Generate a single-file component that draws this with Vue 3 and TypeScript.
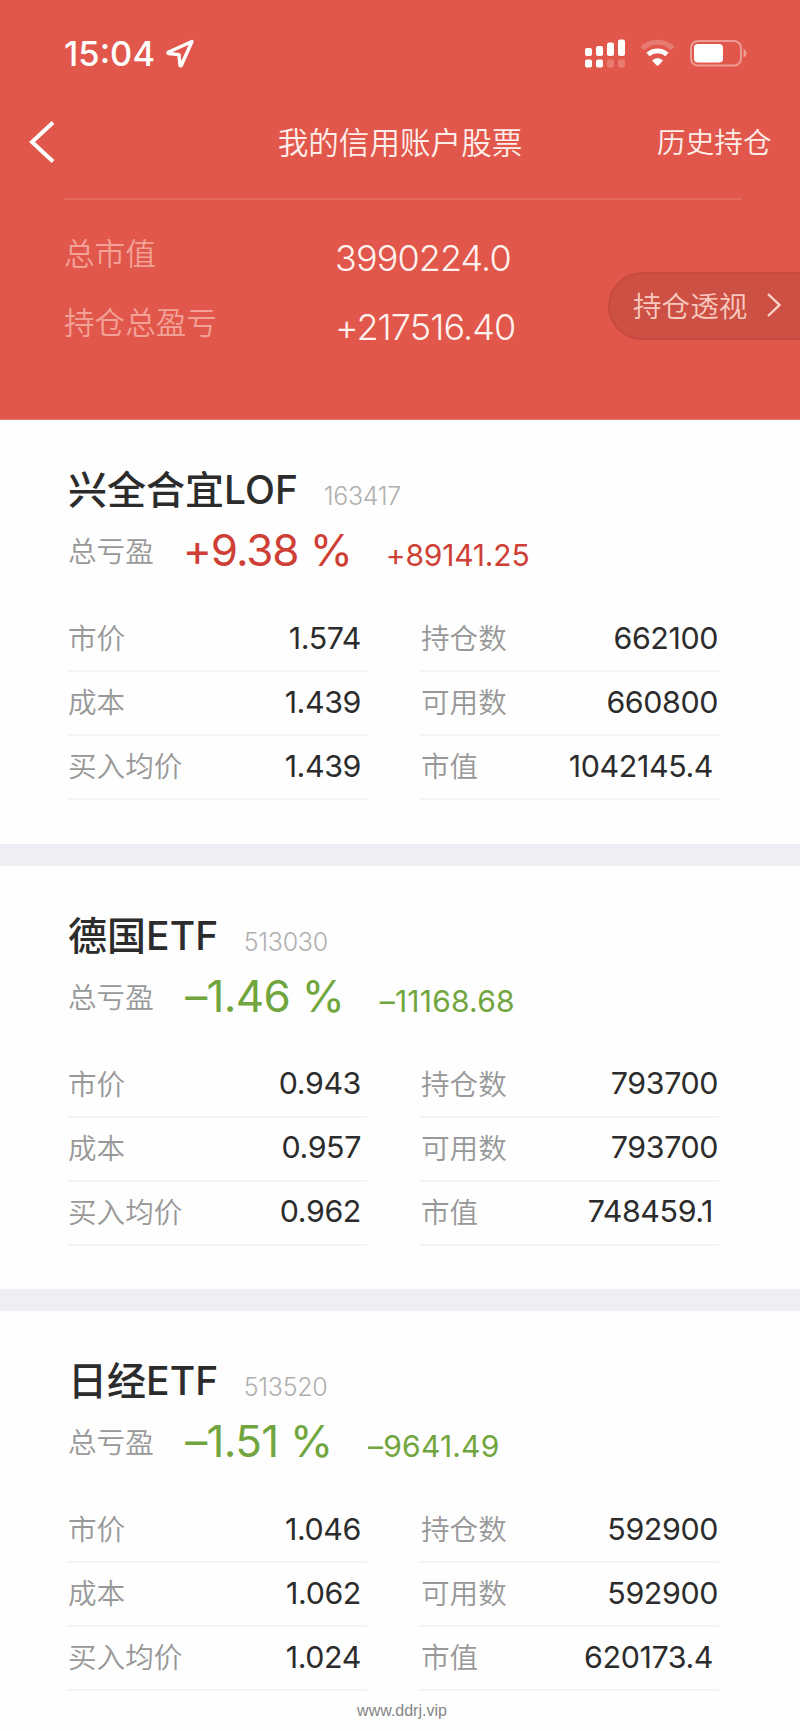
<script setup lang="ts">
interface Field {
  label: string
  value: string
  inset?: boolean
}

interface Holding {
  name: string
  ticker: string
  code: string
  percent: string
  profit: string
  gain: boolean
  left: Field[]
  right: Field[]
}

const build = (
  name: string,
  ticker: string,
  code: string,
  percent: string,
  profit: string,
  values: string[],
): Holding => ({
  name,
  ticker,
  code,
  percent,
  profit,
  gain: profit.startsWith('+'),
  left: [
    { label: '市价', value: values[0] },
    { label: '成本', value: values[1] },
    { label: '买入均价', value: values[2] },
  ],
  right: [
    { label: '持仓数', value: values[3] },
    { label: '可用数', value: values[4] },
    { label: '市值', value: values[5], inset: true },
  ],
})

const holdings: Holding[] = [
  build('兴全合宜', 'LOF', '163417', '+9.38 %', '+89141.25', ['1.574', '1.439', '1.439', '662100', '660800', '1042145.4']),
  build('德国', 'ETF', '513030', '–1.46 %', '–11168.68', ['0.943', '0.957', '0.962', '793700', '793700', '748459.1']),
  build('日经', 'ETF', '513520', '–1.51 %', '–9641.49', ['1.046', '1.062', '1.024', '592900', '592900', '620173.4']),
]
</script>

<template>
  <main class="screen">
    <header class="top">
      <div class="status">
        <span class="time">15:04</span>
        <svg class="locate" width="30" height="30" viewBox="0 0 30 30">
          <path d="M27 2.5 3.2 13.3 Q2.6 14.1 3.6 14.5 L14 15.6 15 26.2 Q15.6 27.4 16.4 26.2 Z" />
        </svg>
        <svg class="signals" width="166" height="30" viewBox="0 0 166 30">
          <g fill="#fff">
            <rect x="1" y="9" width="7" height="8" rx="2" />
            <rect x="12" y="7" width="7" height="10" rx="2" />
            <rect x="23" y="3.5" width="7" height="13.5" rx="2" />
            <rect x="34" y="0.5" width="7" height="16.5" rx="2" />
            <rect x="1" y="20.5" width="7" height="8" rx="2" />
            <rect x="12" y="20.5" width="7" height="8" rx="2" />
            <rect x="23" y="20.5" width="7" height="8" rx="2" opacity=".22" />
            <rect x="34" y="20.5" width="7" height="8" rx="2" opacity=".22" />
          </g>
          <g fill="none" stroke="#fff">
            <path d="M58.3 9.6 A21.5 21.5 0 0 1 88.7 9.6" stroke-width="5" opacity=".22" />
            <path d="M64 15.6 A14 14 0 0 1 83 15.6" stroke-width="4.8" />
          </g>
          <path d="M68 21.6 Q73.5 16.6 79 21.6 L74.6 26.3 Q73.5 27.2 72.4 26.3 Z" fill="#fff" />
          <rect x="107" y="2" width="50" height="24.5" rx="7" fill="none" stroke="#fff" stroke-width="2" opacity=".4" />
          <rect x="110" y="5" width="29" height="18.5" rx="4" fill="#fff" />
          <path d="M159.5 10 Q162.5 11 162.5 14.2 Q162.5 17.4 159.5 18.4 Z" fill="#fff" opacity=".4" />
        </svg>
      </div>

      <nav class="nav">
        <svg class="back" width="26" height="44" viewBox="0 0 26 44">
          <path d="M24 2.5 3 22 24 41.5" />
        </svg>
        <h1>我的信用账户股票</h1>
        <span class="history">历史持仓</span>
      </nav>

      <section class="summary">
        <div class="sum-row">
          <span class="sum-label">总市值</span>
          <span class="sum-value">3990224.0</span>
        </div>
        <div class="sum-row">
          <span class="sum-label">持仓总盈亏</span>
          <span class="sum-value">+217516.40</span>
        </div>
        <button class="lens">
          <span>持仓透视</span>
          <svg width="16" height="26" viewBox="0 0 16 26"><path d="M2 2 13.5 13 2 24" /></svg>
        </button>
      </section>
    </header>

    <article v-for="h in holdings" :key="h.code" class="holding">
      <div class="title">
        <span class="name">{{ h.name }}</span><span class="ticker">{{ h.ticker }}</span>
        <span class="code">{{ h.code }}</span>
      </div>
      <div class="profit" :class="h.gain ? 'gain' : 'loss'">
        <span class="label">总亏盈</span>
        <span class="percent">{{ h.percent }}</span>
        <span class="amount">{{ h.profit }}</span>
      </div>
      <div class="columns">
        <div v-for="(col, i) in [h.left, h.right]" :key="i" class="column">
          <div v-for="f in col" :key="f.label" class="field" :class="{ wide: i === 0, inset: f.inset }">
            <span class="label">{{ f.label }}</span>
            <span class="value">{{ f.value }}</span>
          </div>
        </div>
      </div>
    </article>

    <footer>www.ddrj.vip</footer>
  </main>
</template>

<style>
body {
  margin: 0;
  background: #fefefe;
}
</style>

<style scoped>
.screen {
  position: relative;
  width: 800px;
  height: 1731px;
  overflow: hidden;
  background: #fefefe;
  font-family: Inter, "Noto Sans CJK SC", sans-serif;
  color: #2c2c2c;
}
.top {
  box-sizing: border-box;
  height: 420px;
  background: #e1574b;
  border-bottom: 1px solid #d97c74;
  color: #fff;
}
.status {
  box-sizing: border-box;
  display: flex;
  align-items: center;
  height: 106px;
  padding: 2px 50px 0 64px;
}
.time {
  width: 101px;
  font-size: 34.5px;
  font-weight: 550;
  letter-spacing: 0;
  line-height: 40px;
  white-space: nowrap;
}
.locate path {
  fill: none;
  stroke: #fff;
  stroke-width: 3.4;
  stroke-linejoin: round;
}
.signals {
  margin-left: auto;
}
.nav {
  display: grid;
  grid-template-columns: 248px 1fr 248px;
  align-items: center;
  height: 72px;
  color: #ffeeea;
}
.back {
  margin-left: 29px;
}
.back path {
  fill: none;
  stroke: #fff;
  stroke-width: 4;
}
h1 {
  margin: 0;
  padding-top: 1px;
  font-size: 30.6px;
  font-weight: 350;
  line-height: 40px;
  text-align: center;
}
.history {
  padding: 2px 28.5px 0 0;
  font-size: 28.6px;
  font-weight: 350;
  line-height: 40px;
  text-align: right;
}
.summary {
  position: relative;
  margin: 20px 58px 0 64px;
  padding-top: 21px;
  border-top: 2px solid #e4675c;
}
.sum-row {
  display: flex;
  height: 68.5px;
}
.sum-label {
  width: 271px;
  font-size: 30.6px;
  font-weight: 350;
  line-height: 66px;
  color: #f2a196;
}
.sum-value {
  font-size: 36px;
  font-weight: 330;
  line-height: 74px;
  letter-spacing: -0.9px;
  color: #fff2ee;
}
.lens {
  position: absolute;
  top: 72px;
  left: 544px;
  display: flex;
  align-items: center;
  gap: 19px;
  box-sizing: border-box;
  width: 192px;
  height: 68px;
  padding: 0 0 3px 23px;
  border: 2px solid #c64a42;
  border-right: 0;
  border-radius: 34px 0 0 34px;
  background: #cc5044;
  color: #f8cabf;
  font: 350 28.6px Inter, "Noto Sans CJK SC", sans-serif;
}
.lens path {
  fill: none;
  stroke: #fbd5cc;
  stroke-width: 2.4;
}
.holding {
  box-sizing: border-box;
  height: 445.5px;
  padding: 41px 80px 0 68px;
  border-bottom: 22px solid #efeef4;
}
.holding:last-of-type {
  border-bottom: 0;
}
.title {
  display: flex;
  align-items: baseline;
  height: 58px;
  line-height: 58px;
}
.name {
  font-size: 39px;
  font-weight: 500;
}
.ticker {
  font-size: 39px;
  font-weight: 490;
  letter-spacing: 0.1px;
}
.code {
  position: relative;
  top: 1px;
  margin-left: 25.5px;
  font-size: 25px;
  font-weight: 300;
  letter-spacing: -0.3px;
  color: #b0b0b0;
}
.profit {
  display: flex;
  align-items: baseline;
  height: 80px;
  line-height: 62px;
}
.label {
  font-size: 28.6px;
  font-weight: 350;
  color: #989898;
}
.profit .label {
  position: relative;
  top: -4px;
}
.percent {
  margin-left: 29px;
  font-size: 44px;
  font-weight: 370;
  letter-spacing: -1.1px;
  white-space: pre;
}
.loss .percent {
  margin-left: 31.5px;
  letter-spacing: -0.7px;
}
.amount {
  margin-left: 34px;
  font-size: 30px;
  font-weight: 370;
  letter-spacing: -0.2px;
}
.loss .amount {
  margin-left: 35.5px;
  letter-spacing: 0.2px;
}
.gain .percent,
.gain .amount {
  color: #ce3f35;
}
.loss .percent,
.loss .amount {
  color: #71a53d;
}
.columns {
  display: flex;
  gap: 53px;
  padding-top: 9px;
}
.column {
  width: 299px;
}
.field {
  box-sizing: border-box;
  display: flex;
  align-items: baseline;
  justify-content: space-between;
  height: 64px;
  padding: 0 1px 0 1px;
  border-bottom: 2px solid #f3f3f3;
  line-height: 60px;
}
.field.wide {
  padding: 0 6px 0 0;
}
.field.inset {
  padding-right: 6px;
}
.value {
  position: relative;
  top: -0.5px;
  font-size: 30.4px;
  font-weight: 370;
  letter-spacing: -0.4px;
}
footer {
  position: absolute;
  bottom: 10px;
  left: 0;
  width: 804px;
  text-align: center;
  font: 16px/20px "Liberation Sans", Arial, sans-serif;
  color: #858585;
}
</style>
